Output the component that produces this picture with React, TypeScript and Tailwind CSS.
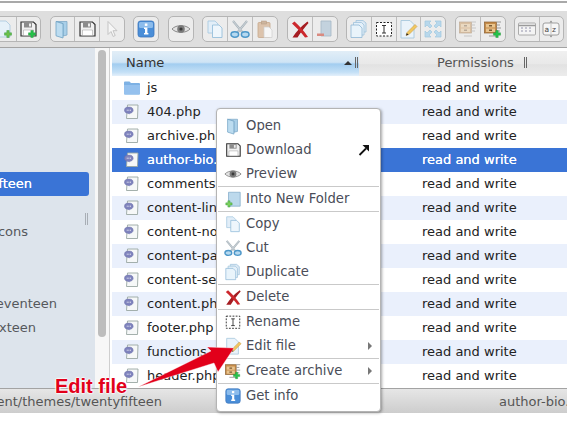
import React from 'react';

const FONT = 'font-["DejaVu_Sans","Liberation_Sans",sans-serif]';

type IconProps = { size?: number };

function Svg({ size = 20, children }: IconProps & { children: React.ReactNode }) {
  return (
    <svg width={size} height={size} viewBox="0 0 20 20" className="shrink-0">
      {children}
    </svg>
  );
}

const Plus = ({ x = 14, y = 15, c = '#3ab54a' }: { x?: number; y?: number; c?: string }) => (
  <path d={`M${x - 1.2} ${y - 3.5}h2.4v2.3h2.3v2.4h-2.3v2.3h-2.4v-2.3h-2.3v-2.4h2.3z`} fill={c} stroke="#1f8f33" strokeWidth="0.4" />
);

const OpenIcon = ({ size }: IconProps) => (
  <Svg size={size}>
    <path d="M4 2.5h11v13.5l-4 1V4.5L4 2.5z" fill="#a9cfe8" stroke="#7fa9c7" strokeWidth="0.8" />
    <path d="M4 2.5l7 2.2V19l-7-2.2z" fill="#bcdcf0" stroke="#6fa2c4" strokeWidth="0.8" />
  </Svg>
);

const Floppy = ({ size, plus }: IconProps & { plus?: boolean }) => (
  <Svg size={size}>
    <path d="M3 3h12.5L18 5.5V17H3z" fill="#f1f1f1" stroke="#333" strokeWidth="1.2" />
    <path d="M6 3.5h8v5H6z" fill="#8b8b8b" />
    <path d="M11 4.5h2v3h-2z" fill="#eee" />
    <path d="M5.5 11h10v5.5h-10z" fill="#fff" stroke="#999" strokeWidth="0.5" />
    {plus && <Plus x={14} y={15} c="#25c24a" />}
  </Svg>
);

const Arrow = ({ size }: IconProps) => (
  <Svg size={size}>
    <path d="M6 2.5v13l3-3 2.2 5 2-1-2.2-4.8h4z" fill="#f6f6f6" stroke="#c4c4c4" strokeWidth="1" />
  </Svg>
);

const Info = ({ size }: IconProps) => (
  <Svg size={size}>
    <rect x="2" y="2" width="16" height="16" rx="2.5" fill="#4a8ed8" stroke="#3c77bd" strokeWidth="0.8" />
    <rect x="3" y="3" width="14" height="6" rx="1.5" fill="#8cbcec" />
    <rect x="8.8" y="4.5" width="2.6" height="2.4" fill="#fff" />
    <path d="M8 8.5h3.4v5.5h1v1.5H8V14h1v-4H8z" fill="#fff" />
  </Svg>
);

const Eye = ({ size }: IconProps) => (
  <Svg size={size}>
    <path d="M1 10C5 5.5 15 5.5 19 10 15 14.5 5 14.5 1 10z" fill="#e2e2e2" stroke="#8a8a8a" strokeWidth="1" />
    <circle cx="10" cy="10" r="3.8" fill="#7a7a7a" />
    <circle cx="10" cy="10" r="1.6" fill="#3a3a3a" />
  </Svg>
);

const Copy = ({ size }: IconProps) => (
  <Svg size={size}>
    <path d="M3 2h7l3 3v9H3z" fill="#e2eef8" stroke="#a9cbe2" strokeWidth="0.9" />
    <path d="M7.5 6h6.5l3 3v9.5H7.5z" fill="#eef6fc" stroke="#97bfdb" strokeWidth="0.9" />
  </Svg>
);

const Cut = ({ size }: IconProps) => (
  <Svg size={size}>
    <path d="M3 2l10 12M17 2L7 14" stroke="#a9b4bc" strokeWidth="2.2" />
    <path d="M3 2l10 12M17 2L7 14" stroke="#e4e8ea" strokeWidth="0.6" />
    <ellipse cx="4.8" cy="15.5" rx="3.8" ry="2.7" fill="#b6d9f0" stroke="#4d97c9" strokeWidth="1.5" />
    <ellipse cx="15.2" cy="15.5" rx="3.8" ry="2.7" fill="#b6d9f0" stroke="#4d97c9" strokeWidth="1.5" />
  </Svg>
);

const Paste = ({ size }: IconProps) => (
  <Svg size={size}>
    <rect x="3" y="3.5" width="12" height="15" rx="1" fill="#dcc3ac" stroke="#c6a88c" strokeWidth="0.8" />
    <rect x="6.5" y="2" width="5" height="3" fill="#cdb59f" stroke="#b3987f" strokeWidth="0.5" />
    <path d="M9 8h5l3 3v7.5H9z" fill="#f6f6f6" stroke="#cfcfcf" strokeWidth="0.7" />
  </Svg>
);

// brush-like X: tapered strokes instead of even lines
const Trash = ({ size }: IconProps) => (
  <Svg size={size}>
    <path d="M2.5 18.5C6 13 11 7 17.5 2.5L18.5 4C14.5 8.500 11 13 7.500 18.500z" fill="#a51d22" />
    <path d="M2 4.500L4.500 2.500C9 6.500 14 12 18 18L15 18.500C11 13.500 7 9 2 4.500z" fill="#cc282d" />
  </Svg>
);

const Unmount = ({ size }: IconProps) => (
  <Svg size={size}>
    <path d="M6 2h10v15H6z" fill="#c3d2de" stroke="#a5b8c6" strokeWidth="0.8" />
    <path d="M2 14.5h7v2.5H2z" fill="#d98a80" />
  </Svg>
);

const Duplicate = ({ size }: IconProps) => (
  <Svg size={size}>
    <path d="M7 1.5h7l3 2.5v9H7z" fill="#dce9f4" stroke="#9fc3dc" strokeWidth="0.8" />
    <path d="M4.5 3.5h8l2.5 2.5v10h-10.500z" fill="#e4f0f9" stroke="#9fc3dc" strokeWidth="0.8" />
    <path d="M2 6h8l3 3v9.5H2z" fill="#e9f4fb" stroke="#8fb8d6" strokeWidth="0.8" />
  </Svg>
);

const Rename = ({ size }: IconProps) => (
  <Svg size={size}>
    <rect x="2.5" y="3.5" width="15" height="13.5" fill="#fff" stroke="#222" strokeWidth="1" strokeDasharray="2 1.5" />
    <path d="M8 6.5h4M8 14h4M10 6.5V14" stroke="#333" strokeWidth="1" fill="none" />
  </Svg>
);

const EditFile = ({ size }: IconProps) => (
  <Svg size={size}>
    <path d="M3 1.5h9l4 4V19H3z" fill="#eaf3fa" stroke="#a8c8de" strokeWidth="0.9" />
    <path d="M8 16.5l1-3L17 5.5l2 2-8 8z" fill="#f0c860" stroke="#c8903c" strokeWidth="0.5" />
    <path d="M8 16.5l.8-2.5 1.7 1.7z" fill="#222" />
  </Svg>
);

const Resize = ({ size }: IconProps) => (
  <Svg size={size}>
    <g fill="#b8d8ec" stroke="#a0c8e0" strokeWidth="0.7">
      <path d="M2 2h6L6 4l3 3-2 2-3-3-2 2z" />
      <path d="M18 2v6l-2-2-3 3-2-2 3-3-2-2z" />
      <path d="M2 18v-6l2 2 3-3 2 2-3 3 2 2z" />
      <path d="M18 18h-6l2-2-3-3 2-2 3 3 2-2z" />
    </g>
  </Svg>
);

const Archive = ({ size, plus, faded }: IconProps & { plus?: boolean; faded?: boolean }) => (
  <Svg size={size}>
    <g opacity={faded ? 0.45 : 1}>
      <rect x="1.5" y="3" width="12" height="11" fill="#c48b4a" stroke="#8a5f30" strokeWidth="0.7" />
      <path d="M3 5h9v3.5H3zM3 9.5h9V13H3z" fill="#e8c48e" />
      <path d="M6 6h3v1.5H6zM6 10.5h3V12H6z" fill="#7a5a34" />
      <path d="M13.5 3H18M13.5 6H17M13.5 9H18M13.5 12H17M6 17h8" stroke="#9a9a9a" strokeWidth="1" />
    </g>
    {plus && <Plus x={14} y={15} c="#25c24a" />}
  </Svg>
);

const NewFile = ({ size }: IconProps) => (
  <Svg size={size}>
    <path d="M4 2h8l4 4v12H4z" fill="#e6f1f9" stroke="#a8c8de" strokeWidth="0.8" />
    <Plus x={14} y={15} c="#6cc04a" />
  </Svg>
);

const NewFolder = ({ size }: IconProps) => (
  <Svg size={size}>
    <path d="M5 2.5h13V18H5z" fill="#bcd9ec" stroke="#7fa9c7" strokeWidth="0.8" />
    <Plus x={5.5} y={15.5} c="#7ccf5c" />
  </Svg>
);

const Icons = ({ size }: IconProps) => (
  <Svg size={size}>
    <rect x="1.5" y="4" width="17" height="12" rx="1" fill="#f4f4f4" stroke="#9a9a9a" strokeWidth="0.8" />
    <path d="M1.5 6.5h17" stroke="#9a9a9a" strokeWidth="1.5" />
    <path d="M4 9h2M8 9h2M12 9h2M4 12h2M8 12h2M12 12h2" stroke="#b4b4c4" strokeWidth="1.5" />
  </Svg>
);

const Sort = ({ size }: IconProps) => (
  <Svg size={size}>
    <rect x="2" y="4" width="16" height="12" rx="2" fill="#f6f6f6" stroke="#8a8a8a" strokeWidth="0.8" />
    <path d="M10 1.5l1.5 2h-3zM10 18.5l1.5-2h-3z" fill="#8a8a8a" />
    <path d="M10 5v10" stroke="#999" strokeWidth="0.5" />
    <text x="3.5" y="13" fontSize="7.5" fill="#444">a</text>
    <text x="11" y="13" fontSize="7.5" fill="#444">z</text>
  </Svg>
);

const PhpIcon = () => (
  <svg width="15" height="16" viewBox="0 0 15 16" className="shrink-0">
    <path d="M3.5 1h10.5l-.5 13.5H2.5z" fill="#f6f8f8" stroke="#9aa7a3" strokeWidth="0.9" />
    <ellipse cx="4.8" cy="6.2" rx="4.3" ry="3.1" fill="#7f83bd" stroke="#6a6ea8" strokeWidth="0.5" />
    <path d="M2.8 6.2h.8M4.5 6.2h.8M6.200 6.2H7" stroke="#fff" strokeWidth="1" />
    <path d="M3.8 9l1.5 1.5L5.8 9z" fill="#7f83bd" />
  </svg>
);

const FolderIcon = () => (
  <svg width="16" height="16" viewBox="0 0 16 16" className="shrink-0">
    <path d="M0 2.5a1 1 0 0 1 1-1h4.500L7 3h8a1 1 0 0 1 1 1v9.500a1 1 0 0 1-1 1H1a1 1 0 0 1-1-1z" fill="#7db1e4" />
    <path d="M0 5h16v8.500a1 1 0 0 1-1 1H1a1 1 0 0 1-1-1z" fill="#95c1ee" />
  </svg>
);

// two thin bars used as the column resize grip
const Handle = () => (
  <span className="flex gap-px">
    <span className="h-[11px] w-px bg-[#666]" />
    <span className="h-[11px] w-px bg-[#666]" />
  </span>
);

const groups: { w: number; items: React.ReactNode[] }[] = [
  { w: 50, items: [<NewFile key="a" />, <Floppy key="b" plus />] },
  { w: 75, items: [<OpenIcon key="a" />, <Floppy key="b" />, <Arrow key="c" />] },
  { w: 26, items: [<Info key="a" />] },
  { w: 26, items: [<Eye key="a" />] },
  { w: 76, items: [<Copy key="a" />, <Cut key="b" />, <Paste key="c" />] },
  { w: 51, items: [<Trash key="a" />, <Unmount key="b" />] },
  { w: 100, items: [<Duplicate key="a" />, <Rename key="b" />, <EditFile key="c" />, <Resize key="d" />] },
  { w: 51, items: [<Archive key="a" faded />, <Archive key="b" plus />] },
  { w: 50, items: [<Icons key="a" />, <Sort key="b" />] },
];

const files = [
  'js',
  '404.php',
  'archive.php',
  'author-bio.php',
  'comments.php',
  'content-link.php',
  'content-none.php',
  'content-page.php',
  'content-search.php',
  'content.php',
  'footer.php',
  'functions.php',
  'header.php',
];

const sidebarRows: { y: number; text: string; width: string; selected?: boolean }[] = [
  { y: 5, text: 'twentyfifteen', width: 'w-[32px]', selected: true },
  { y: 7, text: 'genericons', width: 'w-[28px]' },
  { y: 10, text: 'twentyseventeen', width: 'w-[57px]' },
  { y: 11, text: 'twentysixteen', width: 'w-[36px]' },
];

function Sidebar() {
  return (
    <div className="relative flex h-full w-[95px] shrink-0 flex-col overflow-hidden bg-[#dde4ec] pt-[4px]">
      {Array.from({ length: 14 }).map((_, i) => {
        const row = sidebarRows.find((r) => r.y === i);
        return (
          <div
            key={i}
            className={`flex h-6 w-[89px] shrink-0 items-center rounded-r-[3px] ${row?.selected ? 'bg-[#3a74d6] text-white [text-shadow:0_0_0.6px_#fff]' : 'text-[#55585c]'}`}
          >
            {row && <div className={`flex ${row.width} justify-end whitespace-nowrap`}>{row.text}</div>}
          </div>
        );
      })}
      <div className="absolute top-[165px] left-[85px]">
        <span className="flex gap-px">
          <span className="h-[12px] w-px bg-[#a8aeb5]" />
          <span className="h-[12px] w-px bg-[#a8aeb5]" />
        </span>
      </div>
    </div>
  );
}

function FileTable() {
  return (
    <div className="flex h-full min-w-0 flex-1 flex-col overflow-hidden border-l border-[#cfcfcf] bg-white pl-[2px]">
      <div className="mt-[3px] flex h-[25px] shrink-0 bg-[linear-gradient(#f0f0f0,#e9e9e9_50%,#e2e2e2_55%,#ececec)] pb-[2px]">
        <div className="-mb-[2px] flex w-[247px] shrink-0 items-center justify-between bg-[linear-gradient(#e2eef7_0%,#cfe4f5_45%,#a2cdf0_52%,#c4e0f6_85%,#e4f0fb_100%)] pr-[1px] pb-[2px] pl-[14px] text-[#333]">
          <span>Name</span>
          <span className="flex items-center gap-[3px]">
            <span className="h-0 w-0 border-x-[4px] border-b-[4px] border-x-transparent border-b-[#333]" />
            <Handle />
          </span>
        </div>
        <div className="flex flex-1 items-center pl-[78px] text-[#555]">
          <span>Permissions</span>
          <span className="ml-[10px]">
            <Handle />
          </span>
        </div>
      </div>
      {files.map((name, i) => {
        const selected = name === 'author-bio.php';
        return (
          <div
            key={name}
            className={`flex h-6 shrink-0 items-center ${selected ? 'bg-[#3a74d6] text-white [text-shadow:0_0_0.6px_#fff]' : i % 2 === 1 ? 'bg-[#eaf0fc] text-[#222]' : 'bg-white text-[#222]'}`}
          >
            <div className="flex w-[247px] shrink-0 items-center pl-[12px]">
              {i === 0 ? <FolderIcon /> : <PhpIcon />}
              <span className={`whitespace-nowrap ${i === 0 ? 'ml-[7px]' : 'ml-[8px]'}`}>{name}</span>
            </div>
            <div className="whitespace-nowrap pl-[63px]">read and write</div>
          </div>
        );
      })}
    </div>
  );
}

function MenuItem({ icon, label, sub, extra }: { icon: React.ReactNode; label: string; sub?: boolean; extra?: React.ReactNode }) {
  return (
    <div className="relative flex h-6 items-center gap-[5px] pl-[7px] text-[13.2px] text-[#4a4d58]">
      <span className="flex w-[17px] justify-center">{icon}</span>
      <span className="whitespace-nowrap">{label}</span>
      {sub && <span className="absolute top-[8px] right-[8px] h-0 w-0 border-y-[4px] border-l-[4px] border-y-transparent border-l-[#777]" />}
      {extra}
    </div>
  );
}

const Divider = () => <div className="mx-[1px] h-px bg-[#c9c9c9]" />;

function ContextMenu() {
  return (
    <div className="absolute top-[108px] left-[216px] w-[165px] rounded-[4px] border border-[#b4b4b4] bg-white pt-[5px] pb-[3px] shadow-[1px_1px_3px_rgba(0,0,0,0.35)]">
      <MenuItem icon={<OpenIcon size={18} />} label="Open" />
      <MenuItem
        icon={<Floppy size={18} />}
        label="Download"
        extra={
          <svg width="12" height="12" viewBox="0 0 12 12" className="absolute top-[6px] right-[10px]">
            <path d="M1.5 11L8 4.5" stroke="#111" strokeWidth="1.8" fill="none" />
            <path d="M4.5 1H11v6.5z" fill="#111" />
          </svg>
        }
      />
      <MenuItem icon={<Eye size={18} />} label="Preview" />
      <Divider />
      <MenuItem icon={<NewFolder size={18} />} label="Into New Folder" />
      <Divider />
      <MenuItem icon={<Copy size={18} />} label="Copy" />
      <MenuItem icon={<Cut size={18} />} label="Cut" />
      <MenuItem icon={<Duplicate size={18} />} label="Duplicate" />
      <Divider />
      <MenuItem icon={<Trash size={18} />} label="Delete" />
      <Divider />
      <MenuItem icon={<Rename size={18} />} label="Rename" />
      <MenuItem icon={<EditFile size={18} />} label="Edit file" sub />
      <Divider />
      <MenuItem icon={<Archive size={18} plus />} label="Create archive" sub />
      <Divider />
      <MenuItem icon={<Info size={18} />} label="Get info" />
    </div>
  );
}

export default function App() {
  return (
    <div className={`relative h-[446px] w-[567px] overflow-hidden bg-white text-[13px] ${FONT}`}>
      <div className="mt-px h-[2px] bg-[#a9a9a9]" />
      <div className="h-[8px] bg-white" />
      {/* toolbar */}
      <div className="flex h-[37px] items-center border-b border-[#a3a3a3] bg-[#dedede]">
        <div className="-ml-[9px] flex gap-[8.5px]">
          {groups.map((g, i) => (
            <div key={i} className="flex h-[26px] overflow-hidden rounded-[5px] border border-[#b5b5b5] bg-[#ececec]" style={{ width: g.w }}>
              {g.items.map((icon, j) => (
                <div key={j} className="flex flex-1 items-center justify-center border-l border-[#bdbdbd] first:border-l-0">
                  {icon}
                </div>
              ))}
            </div>
          ))}
        </div>
      </div>
      {/* main */}
      <div className="flex h-[340px] overflow-hidden bg-white">
        <Sidebar />
        <div className="flex w-[14px] shrink-0 justify-center bg-[#f7f7f7] pt-[2px]">
          <div className="h-[287px] w-[8px] rounded-full bg-[#bdbdbd]" />
        </div>
        <FileTable />
      </div>
      {/* status bar */}
      <div className="flex h-[25px] items-center overflow-hidden border-t border-[#a3a3a3] bg-[linear-gradient(#e6e6e6,#cdcdcd)] pt-px text-[#555]">
        <div className="flex w-[162px] shrink-0 justify-end whitespace-nowrap">wp-content/themes/twentyfifteen</div>
        <div className="ml-[337px] whitespace-nowrap">author-bio.php</div>
      </div>
      <ContextMenu />
      {/* annotation */}
      <svg width="110" height="52" viewBox="0 0 110 52" className="absolute top-[340px] left-[130px]">
        <path d="M8 47L81 11 77 7 104 8 88 32 84 23z" fill="#e2001a" stroke="#fff" strokeWidth="0.4" />
      </svg>
      <div className="absolute top-[374px] left-[55px] text-[20px] leading-[24px] font-bold whitespace-nowrap text-[#e2001a] [font-family:'Liberation_Sans',sans-serif] [text-shadow:0_0_2px_#fff,0_0_2px_#fff,0_0_2px_#fff,0_0_2px_#fff]">
        Edit file
      </div>
    </div>
  );
}
